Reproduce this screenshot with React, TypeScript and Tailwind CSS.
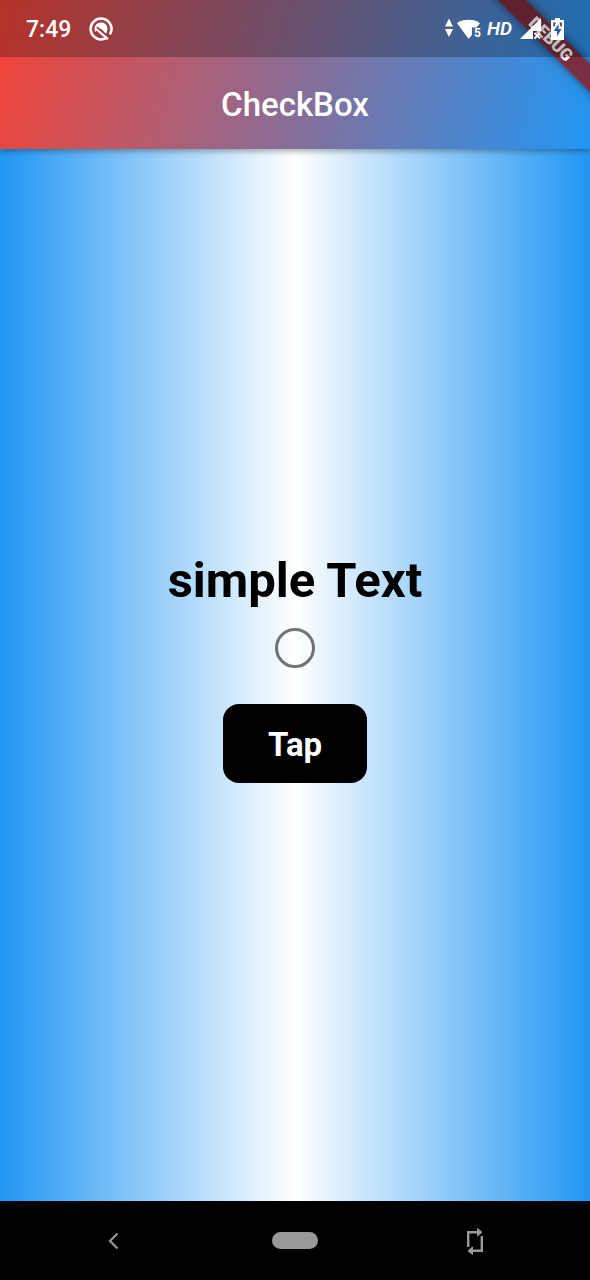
import { useState } from "react";

function NetworkIcon() {
  return (
    <svg width="36" height="24" viewBox="0 0 36 24" fill="#fff" aria-hidden="true">
      <path d="M4 1.500 8 9.500H0zM4 20 8 12H0z" />
      <path d="M12 6.200C15 3.600 19 2.700 23.500 2.700S32 3.600 35 6.200L31.500 10.500H27V18L23.500 21.800z" />
      <text x="29" y="20" fontFamily="Roboto, sans-serif" fontSize="12" fontWeight="700">
        5
      </text>
    </svg>
  );
}

function SignalIcon() {
  return (
    <svg width="22" height="24" viewBox="0 0 22 24" fill="#fff" aria-hidden="true">
      <path d="M0 22 21 1V14H13V22z" />
      <path d="m14.500 16 5.500 5.500m0-5.500-5.500 5.500" stroke="#fff" strokeWidth="1.800" />
    </svg>
  );
}

function BatteryIcon() {
  return (
    <svg width="13" height="22" viewBox="0 0 13 22" aria-hidden="true">
      <path d="M4 0H9V2H13V22H0V2H4z" fill="#fff" />
      <path d="M2.200 8.500V4.500H4.800L3.500 8.500zM8.500 4.500H11V8.500H9.500z" fill="#4a4a6c" />
      <path d="M7.500 6 2.800 13H6V18.500L10.500 11H7.500z" fill="#2a5f9f" />
    </svg>
  );
}

function StatusBar() {
  return (
    <div className="relative flex h-[57px] items-center bg-black/25 pr-[26px] pl-[26px] text-white">
      <span className="pt-[3px] text-[23px] leading-[28px] font-medium">7:49</span>
      <svg className="ml-[18px]" width="24" height="24" viewBox="0 0 24 24" fill="none" aria-hidden="true">
        <path d="M17.500 20.800A10.400 10.400 0 1 1 20.900 17.400" stroke="#fff" strokeWidth="2.600" />
        <path d="M6.300 15A6.500 6.500 0 1 1 18.300 13.500Q17.800 16 16.500 17L13 12.500 9.500 11.500z" fill="#fff" />
        <path d="M8.300 12.800 19 22" stroke="#fff" strokeWidth="2.400" />
        <path d="M7.800 10.200 20.800 20.800" stroke="#9b3a40" strokeWidth="1.500" />
      </svg>
      <div className="ml-auto flex items-center">
        <NetworkIcon />
        <span className="ml-[6px] text-[19px] leading-[24px] font-semibold italic">HD</span>
        <span className="ml-[8px]">
          <SignalIcon />
        </span>
        <span className="ml-[9px]">
          <BatteryIcon />
        </span>
      </div>
    </div>
  );
}

function DebugBanner() {
  return (
    <div className="pointer-events-none absolute top-0 right-0 size-[120px] overflow-hidden">
      <div className="absolute top-[29px] -right-[61px] flex h-[20px] w-[200px] rotate-45 items-center justify-center bg-[#8d1616]/80 text-[17px] leading-[20px] font-black text-white shadow-[0_0_10px_rgba(0,0,0,0.5)]">
        DEBUG
      </div>
    </div>
  );
}

export default function App() {
  const [checked, setChecked] = useState(false);

  return (
    <div className="relative flex min-h-screen flex-col overflow-hidden font-['Roboto',sans-serif]">
      <header className="relative z-10 bg-[linear-gradient(104deg,#f44336,#2196f3)] shadow-[0_2px_6px_rgba(0,0,0,0.35)]">
        <DebugBanner />
        <StatusBar />
        <div className="flex h-[92px] items-center justify-center pt-1">
          <h1 className="text-[33px] leading-[40px] font-medium text-white">CheckBox</h1>
        </div>
      </header>

      <main className="flex flex-1 flex-col items-center justify-center bg-[linear-gradient(90deg,#2196f3,#ffffff,#2196f3)]">
        <label htmlFor="simple" className="text-[49px] leading-[57px] font-bold text-black">
          simple Text
        </label>
        <div className="flex h-[79px] items-center">
          <input
            id="simple"
            type="checkbox"
            checked={checked}
            onChange={(e) => setChecked(e.target.checked)}
            className="size-[40px] appearance-none rounded-full border-[3px] border-black/54 checked:border-[#2196f3] checked:bg-[#2196f3]"
          />
        </div>
        <button
          type="button"
          onClick={() => setChecked(!checked)}
          className="my-4 h-[79px] w-36 rounded-2xl bg-black pt-1 text-[33px] leading-[40px] font-bold text-white"
        >
          Tap
        </button>
      </main>

      <nav className="flex h-[79px] items-center justify-between bg-black px-[102px]">
        <button type="button" aria-label="Back" className="flex size-6 items-center justify-center">
          <svg width="24" height="24" viewBox="0 0 24 24" fill="none" stroke="#999" strokeWidth="2.200">
            <path d="m15.500 4.500-7.500 7.500 7.500 7.500" />
          </svg>
        </button>
        <button type="button" aria-label="Home" className="h-[17px] w-[46px] rounded-full bg-[#999]" />
        <button type="button" aria-label="Rotate screen" className="flex h-7 w-6 items-center justify-center">
          <svg width="24" height="28" viewBox="0 0 24 28" fill="none" stroke="#999" strokeWidth="2.400">
            <path d="M4.200 20V5.200H14M17.800 9V23.800H8" />
            <path d="M13.500 1.500 18 5.200 13.500 9zM8.500 20 4 23.800 8.500 27.500z" fill="#999" strokeWidth="1" />
          </svg>
        </button>
      </nav>
    </div>
  );
}
